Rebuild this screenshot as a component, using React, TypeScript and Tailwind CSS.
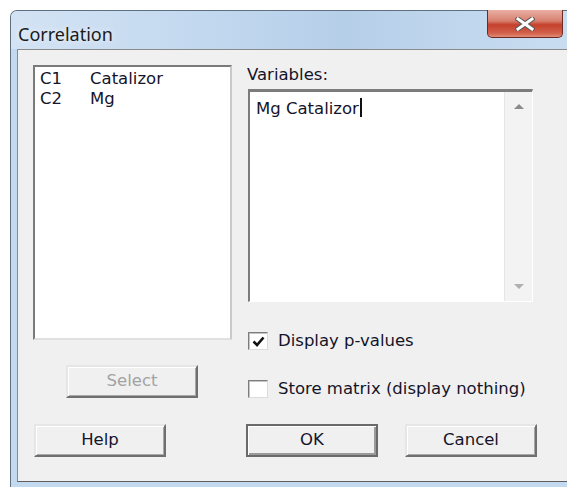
import type { ReactNode } from "react";

const COLUMNS = [
  { id: "C1", name: "Catalizor" },
  { id: "C2", name: "Mg" },
];

function CloseGlyph() {
  return (
    <svg width="20" height="14" viewBox="0 0 20 14">
      <path d="M3 2 L17 12 M17 2 L3 12" stroke="#5a5a5a" strokeWidth="5" strokeLinecap="square" />
      <path d="M3 2 L17 12 M17 2 L3 12" stroke="#ffffff" strokeWidth="3" strokeLinecap="square" />
    </svg>
  );
}

function CheckBox({ checked }: { checked: boolean }) {
  return (
    <div className="flex h-[18px] w-[20px] items-center justify-center border border-t-[#7d7d7d] border-l-[#7d7d7d] border-r-[#dcdcdc] border-b-[#dcdcdc] bg-white shadow-[inset_1px_1px_0_#c4c4c4]">
      {checked ? (
        <svg width="13" height="11" viewBox="0 0 13 11">
          <path d="M1.5 5.5 L5 9 L11.5 1.5" fill="none" stroke="#111" strokeWidth="2.6" />
        </svg>
      ) : null}
    </div>
  );
}

function DialogButton({
  children,
  isDefault = false,
  disabled = false,
  className = "",
}: {
  children: ReactNode;
  isDefault?: boolean;
  disabled?: boolean;
  className?: string;
}) {
  const frame = isDefault
    ? "border-2 border-[#6a6a6a] shadow-[inset_1px_1px_0_#ffffff,inset_-2px_-2px_0_#9a9a9a]"
    : "border-2 border-t-[#e6e6e6] border-l-[#e6e6e6] border-r-[#6f6f6f] border-b-[#6f6f6f] shadow-[inset_1px_1px_0_#ffffff,inset_-1px_-1px_0_#a8a8a8]";

  return (
    <button
      type="button"
      className={`flex h-[33px] w-[132px] items-center justify-center bg-[#f0f0f0] text-[16.5px] ${frame} ${
        disabled ? "text-[#a3a3a3]" : "text-[#14142a]"
      } ${className}`}
    >
      {children}
    </button>
  );
}

export default function App() {
  return (
    <div className="h-[487px] w-[567px] overflow-hidden bg-white pl-[10px] pt-[10px] font-['DejaVu_Sans',sans-serif]">
      <div className="flex h-[480px] w-[557px] flex-col rounded-tl-[7px] border-l border-t border-[#5f6f82] bg-[#c3d9f0]">
        {/* title bar */}
        <div className="flex h-[38px] items-start rounded-tl-[6px] bg-[linear-gradient(90deg,#d3e3f4_0%,#c2d8ef_35%,#b6cfe9_60%,#c9ddf1_100%)]">
          <div className="pl-[7px] pt-[11px] font-['Noto_Sans',sans-serif] text-[18px] leading-[24px] text-[#1b1b1b] [text-shadow:0_0_6px_rgba(255,255,255,0.9)]">
            Correlation
          </div>
          <div className="ml-auto mr-[4px] -mt-[1px] flex h-[28px] w-[76px] items-center justify-center rounded-b-[5px] border border-t-0 border-[#6b2a22] bg-[linear-gradient(180deg,#e9b0a4_0%,#d88070_40%,#c4402c_55%,#d2604a_85%,#e08c78_100%)]">
            <CloseGlyph />
          </div>
        </div>

        {/* client area */}
        <div className="ml-[6px] h-[433px] border-b border-l border-t border-b-[#5e5e5e] border-l-[#8a8a8a] border-t-[#8a8a8a] bg-[#f0f0f0] pl-[15px] pt-[15px] text-[16.5px] text-[#14142a]">
          <div className="flex gap-[15px]">
            <div className="flex w-[199px] flex-col">
              <div className="h-[275px] border-2 border-t-[#7a7a7a] border-l-[#7a7a7a] border-r-[#c9c9c9] border-b-[#e0e0e0] bg-white pl-[5px] pt-[2px] leading-[20px]">
                {COLUMNS.map((column) => (
                  <div key={column.id} className="flex">
                    <span className="w-[50px]">{column.id}</span>
                    <span>{column.name}</span>
                  </div>
                ))}
              </div>
              <DialogButton disabled className="ml-[33px] mt-[25px]">
                Select
              </DialogButton>
            </div>

            <div className="flex flex-col">
              <div className="leading-[19px]">Variables:</div>
              <div className="ml-[1px] mt-[5px] flex h-[213px] w-[285px] border-l-2 border-t-[3px] border-r border-b border-t-[#7c7c7c] border-l-[#7c7c7c] border-r-[#ffffff] border-b-[#ffffff] bg-white">
                <div className="flex-1 pl-[6px] pt-[3px] leading-[20px]">
                  <span>Mg Catalizor</span>
                  <span className="ml-[1px] inline-block h-[19px] w-[2px] translate-y-[3px] bg-[#111]" />
                </div>
                <div className="flex w-[28px] flex-col items-center justify-between border-l border-[#e6e6e6] bg-[#f3f3f3] py-[11px]">
                  <svg width="10" height="6" viewBox="0 0 10 6">
                    <path d="M0 6 L5 1 L10 6 Z" fill="#8c8c8c" />
                  </svg>
                  <svg width="10" height="6" viewBox="0 0 10 6">
                    <path d="M0 0 L5 5 L10 0 Z" fill="#b0b0b0" />
                  </svg>
                </div>
              </div>

              <label className="ml-[1px] mt-[29px] flex h-[20px] items-center gap-[10px]">
                <CheckBox checked />
                <span>Display p-values</span>
              </label>
              <label className="ml-[1px] mt-[28px] flex h-[20px] items-center gap-[10px]">
                <CheckBox checked={false} />
                <span>Store matrix (display nothing)</span>
              </label>
            </div>
          </div>

          <div className="ml-[1px] mt-[25px] flex">
            <DialogButton>Help</DialogButton>
            <DialogButton isDefault className="ml-[80px]">
              OK
            </DialogButton>
            <DialogButton className="ml-[27px]">Cancel</DialogButton>
          </div>
        </div>
      </div>
    </div>
  );
}
